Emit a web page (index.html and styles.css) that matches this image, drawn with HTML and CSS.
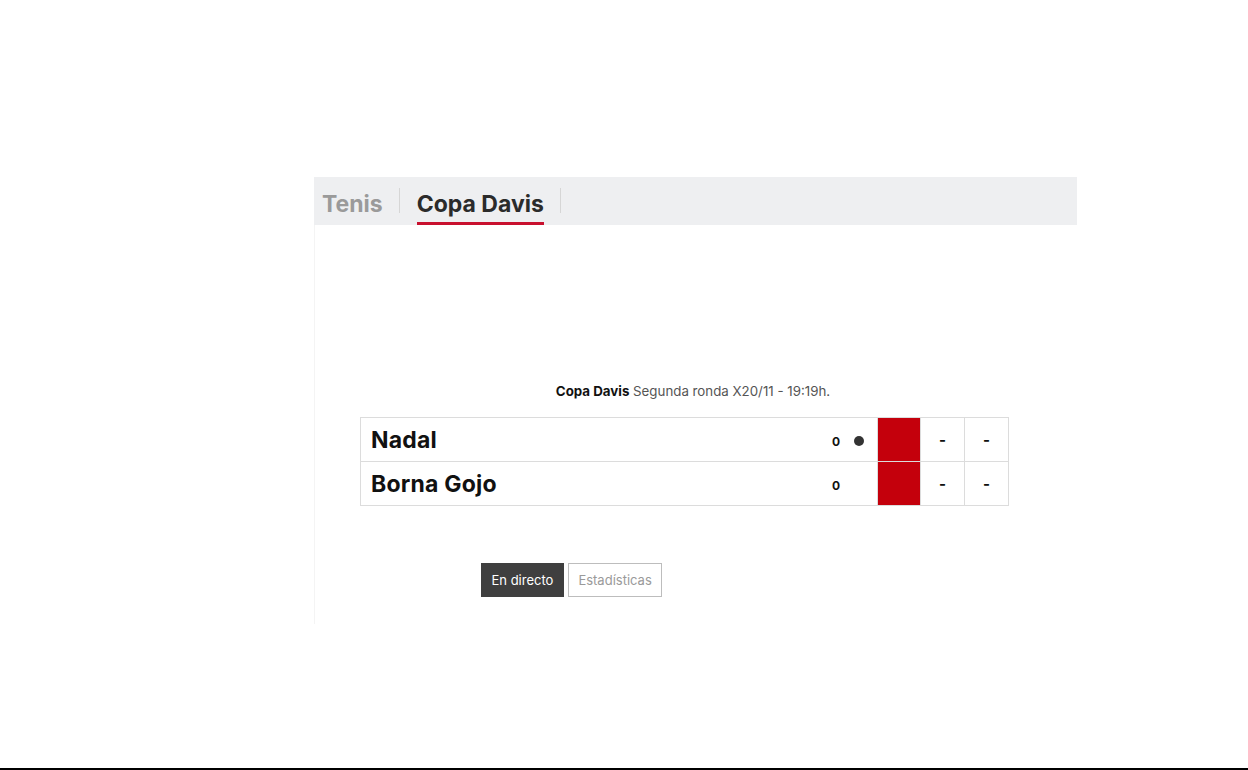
FILE: index.html
```html
<!DOCTYPE html>
<html lang="es">
<head>
<meta charset="utf-8">
<title>Copa Davis</title>
<link rel="stylesheet" href="styles.css">
</head>
<body>
<div class="page">
  <div class="widget">
    <nav class="tabs">
      <a class="tab">Tenis</a>
      <span class="sep"></span>
      <a class="tab active"><span class="label">Copa Davis</span></a>
      <span class="sep"></span>
    </nav>
    <section class="panel">
      <p class="meta"><b>Copa Davis</b> Segunda ronda X20/11 - 19:19h.</p>
      <table class="score">
        <colgroup>
          <col class="c-name">
          <col class="c-pts">
          <col class="c-red">
          <col class="c-set">
          <col class="c-set">
        </colgroup>
        <tr>
          <td class="name">Nadal</td>
          <td class="pts"><span class="num">0</span><span class="serve"></span></td>
          <td class="set red"></td>
          <td class="set">-</td>
          <td class="set">-</td>
        </tr>
        <tr>
          <td class="name">Borna Gojo</td>
          <td class="pts"><span class="num">0</span><span class="serve none"></span></td>
          <td class="set red"></td>
          <td class="set">-</td>
          <td class="set">-</td>
        </tr>
      </table>
      <div class="buttons">
        <a class="btn dark">En directo</a>
        <a class="btn light">Estadísticas</a>
      </div>
    </section>
  </div>
</div>
</body>
</html>
```

FILE: styles.css
```css
html, body {
  margin: 0;
  padding: 0;
  background: #fff;
}
body {
  font-family: Inter, "Open Sans", "Liberation Sans", sans-serif;
  color: #111;
}
.page {
  height: 768px;
  border-bottom: 2px solid #000;
  overflow: hidden;
}
.widget {
  margin: 177px 0 0 314px;
  width: 763px;
}
.tabs {
  height: 48px;
  background: #eeeff1;
  display: flex;
  align-items: flex-start;
}
.tab {
  font-size: 23px;
  font-weight: 700;
  line-height: 28px;
  margin-top: 13px;
  color: #9a9a9a;
}
.tabs .tab:first-child {
  margin-left: 8px;
}
.tab.active {
  color: #2b2b2b;
}
.tab.active .label {
  display: inline-block;
  padding-bottom: 4px;
  border-bottom: 3px solid #c8102e;
}
.sep {
  width: 1px;
  height: 25px;
  margin: 11px 17px 0 16px;
  background: #d6d6d6;
}
.panel {
  height: 399px;
  border-left: 1px solid #f4f4f4;
  box-sizing: border-box;
  overflow: hidden;
}
.meta {
  margin: 158px 0 0;
  padding-right: 6px;
  text-align: center;
  font-size: 13.3px;
  line-height: 16px;
  color: #555;
}
.meta b {
  color: #111;
}
.score {
  margin: 18px 0 0 45px;
  width: 649px;
  border-collapse: collapse;
  table-layout: fixed;
}
.c-pts { width: 62px; }
.c-red { width: 43px; }
.c-set { width: 44px; }
.score td {
  border: 1px solid #dcdcdc;
  height: 43px;
  padding: 0;
}
.score .name {
  border-right: none;
  font-size: 23px;
  font-weight: 700;
  letter-spacing: 0.2px;
  padding-left: 10px;
  color: #111;
  white-space: nowrap;
}
.score .pts {
  border-left: none;
  text-align: right;
  white-space: nowrap;
}
.num {
  font-size: 12px;
  font-weight: 700;
  display: inline-block;
  width: 10px;
  text-align: center;
  vertical-align: middle;
}
.serve {
  display: inline-block;
  width: 10px;
  height: 10px;
  border-radius: 50%;
  background: #333;
  margin: 0 13px 0 13px;
  vertical-align: middle;
}
.serve.none {
  background: transparent;
}
.score .set {
  text-align: center;
  font-size: 15px;
  font-weight: 700;
}
.score .set.red {
  background: #c4000c;
}
.buttons {
  margin: 57px 0 0 166px;
  display: flex;
  gap: 4px;
}
.btn {
  height: 34px;
  box-sizing: border-box;
  font-size: 13px;
  line-height: 32px;
  padding: 0 9.5px;
}
.btn.dark {
  background: #3f3f3f;
  color: #fff;
  border: 1px solid #3f3f3f;
}
.btn.light {
  background: #fff;
  color: #9a9a9a;
  border: 1px solid #bdbdbd;
}
```
